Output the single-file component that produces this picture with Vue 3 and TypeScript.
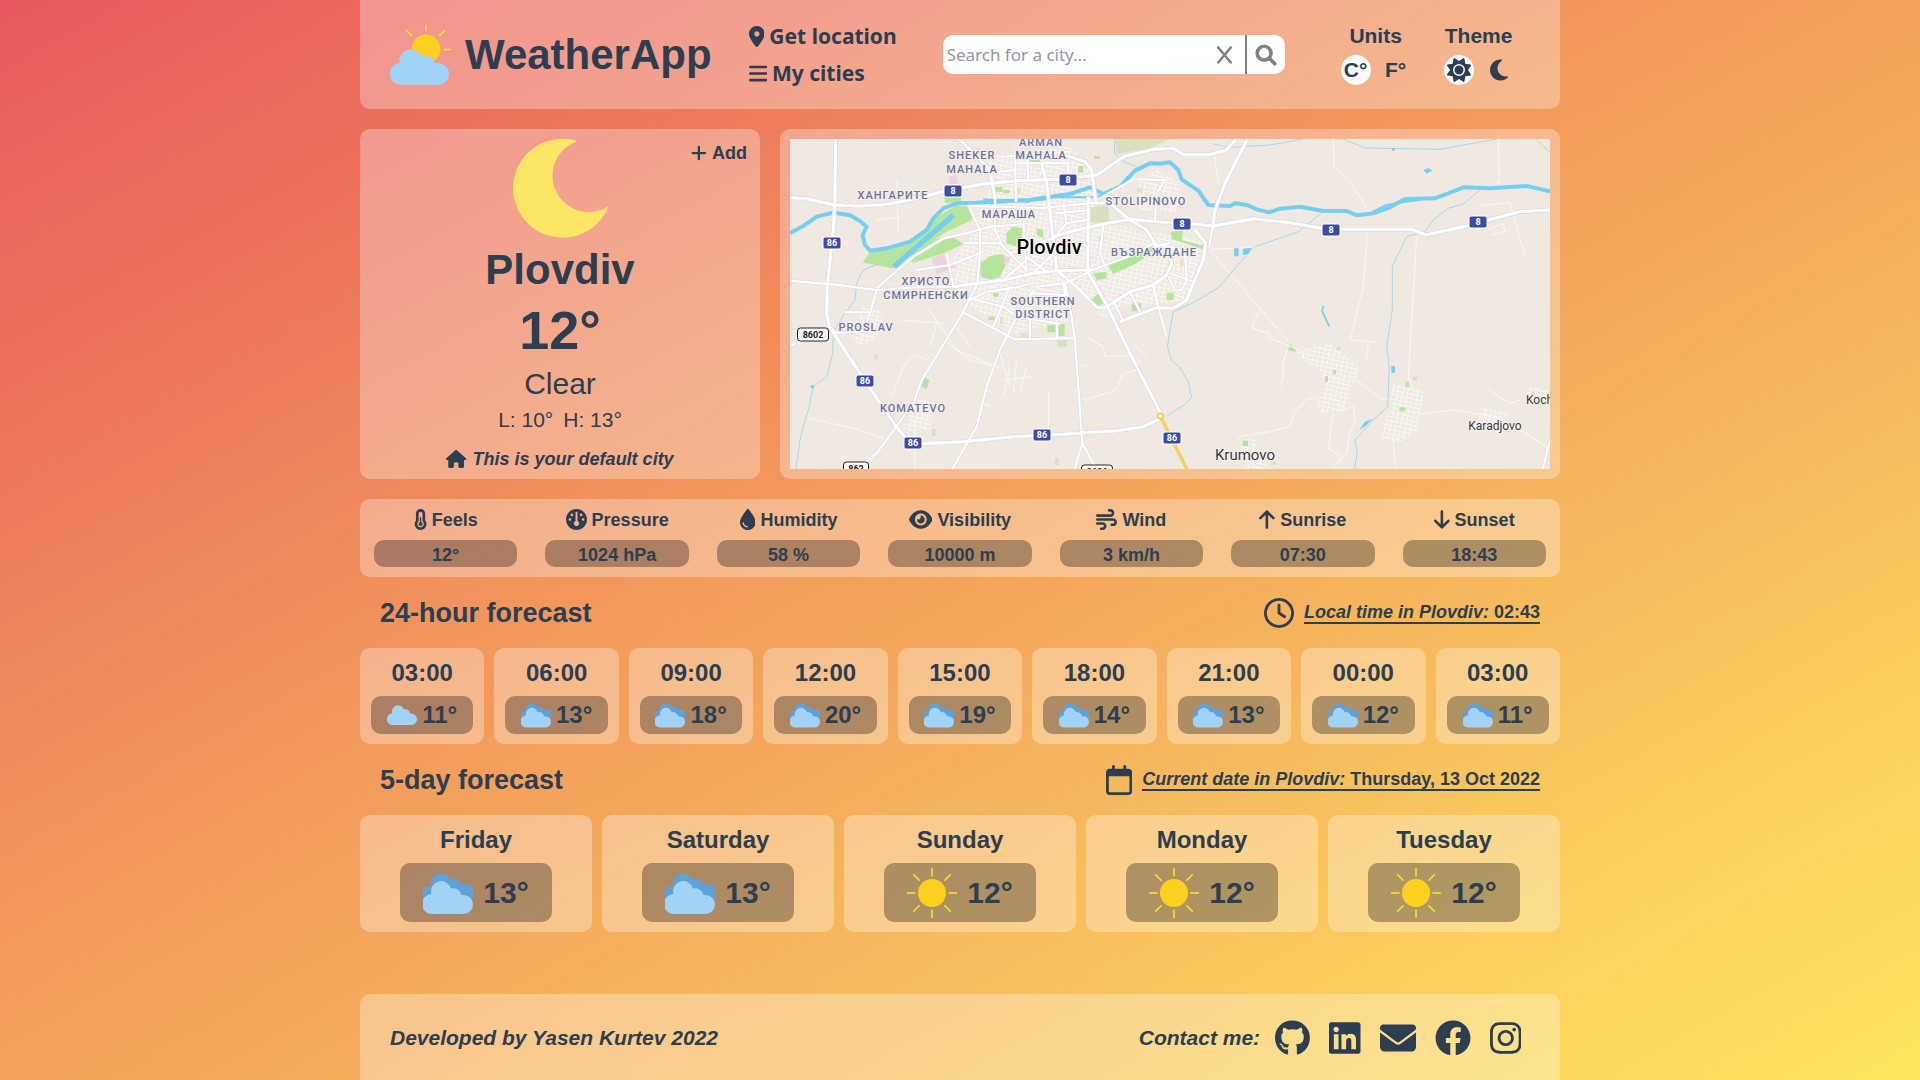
<script setup lang="ts">
import { h, ref, computed } from 'vue'

type Glyph = [width: number, path: string]

const glyphs: Record<string, Glyph> = {
  location: [384, 'M215.7 499.2C267 435 384 279.4 384 192C384 86 298 0 192 0S0 86 0 192c0 87.4 117 243 168.3 307.2c12.3 15.3 35.1 15.3 47.4 0zM192 256c-35.3 0-64-28.7-64-64s28.7-64 64-64s64 28.7 64 64s-28.7 64-64 64z'],
  bars: [448, 'M0 96C0 78.3 14.3 64 32 64H416c17.7 0 32 14.3 32 32s-14.3 32-32 32H32C14.3 128 0 113.7 0 96zM0 256c0-17.7 14.3-32 32-32H416c17.7 0 32 14.3 32 32s-14.3 32-32 32H32c-17.7 0-32-14.3-32-32zM448 416c0 17.7-14.3 32-32 32H32c-17.7 0-32-14.3-32-32s14.3-32 32-32H416c17.7 0 32 14.3 32 32z'],
  clear: [384, 'M376.6 84.5c11.3-13.6 9.5-33.8-4.1-45.1s-33.8-9.5-45.1 4.1L192 206 56.6 43.5C45.3 29.9 25.1 28.1 11.5 39.4S-3.9 70.9 7.4 84.5L150.3 256 7.4 427.5c-11.3 13.6-9.5 33.8 4.1 45.1s33.8 9.5 45.1-4.1L192 306 327.4 468.5c11.3 13.6 31.5 15.4 45.1 4.1s15.4-31.5 4.1-45.1L233.7 256 376.6 84.5z'],
  search: [512, 'M416 208c0 45.9-14.9 88.3-40 122.7L502.6 457.4c12.5 12.5 12.5 32.8 0 45.3s-32.8 12.5-45.3 0L330.7 376c-34.4 25.2-76.8 40-122.7 40C93.1 416 0 322.9 0 208S93.1 0 208 0S416 93.1 416 208zM208 352c79.5 0 144-64.5 144-144s-64.5-144-144-144S64 128.5 64 208s64.5 144 144 144z'],
  sun: [512, 'M361.5 1.2c5 2.1 8.6 6.6 9.6 11.9L391 121l107.9 19.8c5.3 1 9.8 4.6 11.9 9.6s1.5 10.7-1.6 15.2L446.9 256l62.3 90.3c3.1 4.5 3.7 10.2 1.6 15.2s-6.6 8.6-11.9 9.6L391 391 371.1 498.9c-1 5.3-4.6 9.8-9.6 11.9s-10.7 1.5-15.2-1.6L256 446.9l-90.3 62.3c-4.5 3.1-10.2 3.7-15.2 1.6s-8.6-6.6-9.6-11.9L121 391 13.1 371.1c-5.3-1-9.8-4.6-11.9-9.6s-1.5-10.7 1.6-15.2L65.1 256 2.8 165.7c-3.1-4.5-3.7-10.2-1.6-15.2s6.6-8.6 11.9-9.6L121 121 140.9 13.1c1-5.3 4.6-9.8 9.6-11.9s10.7-1.5 15.2 1.6L256 65.1 346.3 2.8c4.5-3.1 10.2-3.7 15.2-1.6zM160 256a96 96 0 1 1 192 0 96 96 0 1 1 -192 0zm224 0a128 128 0 1 0 -256 0 128 128 0 1 0 256 0z'],
  moon: [384, 'M223.5 32C100 32 0 132.3 0 256S100 480 223.5 480c60.6 0 115.5-24.2 155.8-63.4c5-4.9 6.3-12.5 3.1-18.7s-10.1-9.7-17-8.5c-9.8 1.7-19.8 2.6-30.1 2.6c-96.9 0-175.5-78.8-175.5-176c0-65.8 36-123.1 89.3-153.3c6.1-3.5 9.2-10.5 7.7-17.3s-7.3-11.9-14.3-12.5c-6.3-.5-12.6-.8-19-.8z'],
  house: [576, 'M575.8 255.5c0 18-15 32.1-32 32.1h-32l.7 160.2c0 2.7-.2 5.4-.5 8.1V472c0 22.1-17.9 40-40 40H456c-1.1 0-2.2 0-3.3-.1c-1.4 .1-2.8 .1-4.2 .1H416 392c-22.1 0-40-17.9-40-40V448 384c0-17.7-14.3-32-32-32H256c-17.7 0-32 14.3-32 32v64 24c0 22.1-17.9 40-40 40H160 128.1c-1.5 0-3-.1-4.5-.2c-1.2 .1-2.4 .2-3.6 .2H104c-22.1 0-40-17.9-40-40V360c0-.9 0-1.9 .1-2.8V287.6H32c-18 0-32-14-32-32.1c0-9 3-17 10-24L266.4 8c7-7 15-8 22-8s15 2 21 7L564.8 231.5c8 7 12 15 11 24z'],
  plus: [448, 'M256 80c0-17.7-14.3-32-32-32s-32 14.3-32 32V224H48c-17.7 0-32 14.3-32 32s14.3 32 32 32H192V432c0 17.7 14.3 32 32 32s32-14.3 32-32V288H400c17.7 0 32-14.3 32-32s-14.3-32-32-32H256V80z'],
  thermometer: [320, 'M160 64c-26.5 0-48 21.5-48 48V276.5c0 17.3-7.1 31.9-15.3 42.5C86.2 332.6 80 349.5 80 368c0 44.2 35.8 80 80 80s80-35.8 80-80c0-18.5-6.2-35.4-16.7-48.9c-8.2-10.6-15.3-25.2-15.3-42.5V112c0-26.5-21.5-48-48-48zM48 112C48 50.2 98.1 0 160 0s112 50.1 112 112V276.5c0 .1 .1 .3 .2 .6c.2 .6 .8 1.6 1.7 2.8c18.9 24.4 30.1 55 30.1 88.1c0 79.5-64.5 144-144 144S16 447.5 16 368c0-33.2 11.2-63.8 30.1-88.1c.9-1.2 1.5-2.2 1.7-2.8c.1-.3 .2-.5 .2-.6V112zM208 368c0 26.5-21.5 48-48 48s-48-21.5-48-48c0-20.9 13.4-38.7 32-45.3V208c0-8.8 7.2-16 16-16s16 7.2 16 16V322.7c18.6 6.6 32 24.4 32 45.3z'],
  gauge: [512, 'M0 256C0 114.6 114.6 0 256 0S512 114.6 512 256s-114.6 256-256 256S0 397.4 0 256zM320 352c0-26.9-16.5-49.9-40-59.3V88c0-13.3-10.7-24-24-24s-24 10.7-24 24V292.7c-23.5 9.5-40 32.5-40 59.3c0 35.3 28.7 64 64 64s64-28.7 64-64zM144 176a32 32 0 1 0 0-64 32 32 0 1 0 0 64zm-16 80a32 32 0 1 0 -64 0 32 32 0 1 0 64 0zm288 32a32 32 0 1 0 0-64 32 32 0 1 0 0 64zM400 144a32 32 0 1 0 -64 0 32 32 0 1 0 64 0z'],
  droplet: [384, 'M192 512C86 512 0 426 0 320C0 228.8 130.2 57.7 166.6 11.7C172.6 4.2 181.5 0 191.1 0h1.8c9.6 0 18.5 4.2 24.5 11.7C253.8 57.7 384 228.8 384 320c0 106-86 192-192 192zM96 336c0-8.8-7.2-16-16-16s-16 7.2-16 16c0 61.9 50.1 112 112 112c8.8 0 16-7.2 16-16s-7.2-16-16-16c-44.2 0-80-35.8-80-80z'],
  eye: [576, 'M288 32c-80.8 0-145.5 36.8-192.6 80.6C48.6 156 17.3 208 2.5 243.7c-3.3 7.9-3.3 16.7 0 24.6C17.3 304 48.6 356 95.4 399.4C142.5 443.2 207.2 480 288 480s145.5-36.8 192.6-80.6c46.8-43.5 78.1-95.4 93-131.1c3.3-7.9 3.3-16.7 0-24.6c-14.9-35.7-46.2-87.7-93-131.1C433.5 68.8 368.8 32 288 32zM432 256c0 79.5-64.5 144-144 144s-144-64.5-144-144s64.5-144 144-144s144 64.5 144 144zM288 192c0 35.3-28.7 64-64 64c-11.5 0-22.3-3-31.6-8.4c-.2 2.8-.4 5.5-.4 8.4c0 53 43 96 96 96s96-43 96-96s-43-96-96-96c-2.8 0-5.6 .1-8.4 .4c5.3 9.3 8.4 20.1 8.4 31.6z'],
  wind: [512, 'M288 32c0 17.7 14.3 32 32 32h32c17.7 0 32 14.3 32 32s-14.3 32-32 32H32c-17.7 0-32 14.3-32 32s14.3 32 32 32H352c53 0 96-43 96-96s-43-96-96-96H320c-17.7 0-32 14.3-32 32zm64 352c0 17.7 14.3 32 32 32h32c53 0 96-43 96-96s-43-96-96-96H32c-17.7 0-32 14.3-32 32s14.3 32 32 32H416c17.7 0 32 14.3 32 32s-14.3 32-32 32H384c-17.7 0-32 14.3-32 32zM128 512h32c53 0 96-43 96-96s-43-96-96-96H32c-17.7 0-32 14.3-32 32s14.3 32 32 32H160c17.7 0 32 14.3 32 32s-14.3 32-32 32H128c-17.7 0-32 14.3-32 32s14.3 32 32 32z'],
  up: [384, 'M214.6 41.4c-12.5-12.5-32.8-12.5-45.3 0l-160 160c-12.5 12.5-12.5 32.8 0 45.3s32.8 12.5 45.3 0L160 141.2V448c0 17.7 14.3 32 32 32s32-14.3 32-32V141.2L329.4 246.6c12.5 12.5 32.8 12.5 45.3 0s12.5-32.8 0-45.3l-160-160z'],
  down: [384, 'M169.4 470.6c12.5 12.5 32.8 12.5 45.3 0l160-160c12.5-12.5 12.5-32.8 0-45.3s-32.8-12.5-45.3 0L224 370.8V64c0-17.7-14.3-32-32-32s-32 14.3-32 32V370.7L54.6 265.4c-12.5-12.5-32.8-12.5-45.3 0s-12.5 32.8 0 45.3l160 160z'],
  clock: [512, 'M464 256A208 208 0 1 1 48 256a208 208 0 1 1 416 0zM0 256a256 256 0 1 0 512 0A256 256 0 1 0 0 256zM232 120V256c0 8 4 15.5 10.7 20l96 64c11 7.4 25.9 4.4 33.3-6.7s4.4-25.9-6.7-33.3L280 243.2V120c0-13.3-10.7-24-24-24s-24 10.7-24 24z'],
  calendar: [448, 'M152 24c0-13.3-10.7-24-24-24s-24 10.7-24 24V64H64C28.7 64 0 92.7 0 128v16 48V448c0 35.3 28.7 64 64 64H384c35.3 0 64-28.7 64-64V192 144 128c0-35.3-28.7-64-64-64H344V24c0-13.3-10.7-24-24-24s-24 10.7-24 24V64H152V24zM48 192H400V448c0 8.8-7.2 16-16 16H64c-8.8 0-16-7.2-16-16V192z'],
  github: [496, 'M165.9 397.4c0 2-2.3 3.6-5.2 3.6-3.3.3-5.6-1.3-5.6-3.6 0-2 2.3-3.6 5.2-3.6 3-.3 5.6 1.3 5.6 3.6zm-31.1-4.5c-.7 2 1.3 4.3 4.3 4.9 2.6 1 5.6 0 6.2-2s-1.3-4.3-4.3-5.2c-2.6-.7-5.5.3-6.2 2.3zm44.2-1.7c-2.9.7-4.9 2.6-4.6 4.9.3 2 2.9 3.3 5.9 2.6 2.9-.7 4.9-2.6 4.6-4.6-.3-1.9-3-3.2-5.9-2.9zM244.8 8C106.1 8 0 113.3 0 252c0 110.9 69.8 205.8 169.5 239.2 12.8 2.3 17.3-5.6 17.3-12.1 0-6.2-.3-40.4-.3-61.4 0 0-70 15-84.7-29.8 0 0-11.4-29.1-27.8-36.6 0 0-22.9-15.7 1.6-15.4 0 0 24.9 2 38.6 25.8 21.9 38.6 58.6 27.5 72.9 20.9 2.3-16 8.8-27.1 16-33.7-55.9-6.2-112.3-14.3-112.3-110.5 0-27.5 7.6-41.3 23.6-58.9-2.6-6.5-11.1-33.3 2.6-67.9 20.9-6.5 69 27 69 27 20-5.6 41.5-8.5 62.8-8.5s42.8 2.9 62.8 8.5c0 0 48.1-33.6 69-27 13.7 34.7 5.2 61.4 2.6 67.9 16 17.7 25.8 31.5 25.8 58.9 0 96.5-58.9 104.2-114.8 110.5 9.2 7.9 17 22.9 17 46.4 0 33.7-.3 75.4-.3 83.6 0 6.5 4.6 14.4 17.3 12.1C428.2 457.8 496 362.9 496 252 496 113.3 383.5 8 244.8 8zM97.2 352.9c-1.3 1-1 3.3.7 5.2 1.6 1.6 3.9 2.3 5.2 1 1.3-1 1-3.3-.7-5.2-1.6-1.6-3.9-2.3-5.2-1zm-10.8-8.1c-.7 1.3.3 2.9 2.3 3.9 1.6 1 3.6.7 4.3-.7.7-1.3-.3-2.9-2.3-3.9-2-.6-3.6-.3-4.3.7zm32.4 35.6c-1.6 1.3-1 4.3 1.3 6.2 2.3 2.3 5.2 2.6 6.5 1 1.3-1.3.7-4.3-1.3-6.2-2.2-2.3-5.2-2.6-6.5-1zm-11.4-14.7c-1.6 1-1.6 3.6 0 5.9 1.6 2.3 4.3 3.3 5.6 2.3 1.6-1.3 1.6-3.9 0-6.2-1.4-2.3-4-3.3-5.6-2z'],
  linkedin: [448, 'M416 32H31.9C14.3 32 0 46.5 0 64.3v383.4C0 465.5 14.3 480 31.9 480H416c17.6 0 32-14.5 32-32.3V64.3c0-17.8-14.4-32.3-32-32.3zM135.4 416H69V202.2h66.5V416zm-33.2-243c-21.3 0-38.5-17.3-38.5-38.5S80.9 96 102.2 96c21.2 0 38.5 17.3 38.5 38.5 0 21.3-17.2 38.5-38.5 38.5zm282.1 243h-66.4V312c0-24.8-.5-56.7-34.5-56.7-34.6 0-39.9 27-39.9 54.9V416h-66.4V202.2h63.7v29.2h.9c8.9-16.8 30.6-34.5 62.9-34.5 67.2 0 79.7 44.3 79.7 101.9V416z'],
  envelope: [512, 'M48 64C21.5 64 0 85.5 0 112c0 15.1 7.1 29.3 19.2 38.4L236.8 313.6c11.4 8.5 27 8.5 38.4 0L492.8 150.4c12.1-9.1 19.2-23.3 19.2-38.4c0-26.5-21.5-48-48-48H48zM0 176V384c0 35.3 28.7 64 64 64H448c35.3 0 64-28.7 64-64V176L294.4 339.2c-22.8 17.1-54 17.1-76.8 0L0 176z'],
  facebook: [512, 'M504 256C504 119 393 8 256 8S8 119 8 256c0 123.78 90.69 226.38 209.25 245V327.69h-63V256h63v-54.64c0-62.15 37-96.48 93.67-96.48 27.14 0 55.52 4.84 55.52 4.84v61h-31.28c-30.8 0-40.41 19.12-40.41 38.73V256h68.78l-11 71.69h-57.78V501C413.31 482.38 504 379.78 504 256z'],
  instagram: [448, 'M224.1 141c-63.6 0-114.9 51.3-114.9 114.9s51.3 114.9 114.9 114.9S339 319.5 339 255.9 287.7 141 224.1 141zm0 189.6c-41.1 0-74.7-33.5-74.7-74.7s33.5-74.7 74.7-74.7 74.7 33.5 74.7 74.7-33.6 74.7-74.7 74.7zm146.4-194.3c0 14.9-12 26.8-26.8 26.8-14.9 0-26.8-12-26.8-26.8s12-26.8 26.8-26.8 26.8 12 26.8 26.8zm76.1 27.2c-1.7-35.9-9.9-67.7-36.2-93.9-26.2-26.2-58-34.4-93.9-36.2-37-2.1-147.9-2.1-184.9 0-35.8 1.7-67.6 9.9-93.9 36.1s-34.4 58-36.2 93.9c-2.1 37-2.1 147.9 0 184.9 1.7 35.9 9.9 67.7 36.2 93.9s58 34.4 93.9 36.2c37 2.1 147.9 2.1 184.9 0 35.9-1.7 67.7-9.9 93.9-36.2 26.2-26.2 34.4-58 36.2-93.9 2.1-37 2.1-147.8 0-184.8zM398.8 388c-7.8 19.6-22.9 34.7-42.6 42.6-29.5 11.7-99.5 9-132.1 9s-102.7 2.6-132.1-9c-19.6-7.8-34.7-22.9-42.6-42.6-11.7-29.5-9-99.5-9-132.1s-2.6-102.7 9-132.1c7.8-19.6 22.9-34.7 42.6-42.6 29.5-11.7 99.5-9 132.1-9s102.7-2.6 132.1 9c19.6 7.8 34.7 22.9 42.6 42.6 11.7 29.5 9 99.5 9 132.1s2.7 102.7-9 132.1z'],
}

const Icon = (props: { name: string }) => {
  const [width, path] = glyphs[props.name]
  return h('svg', { viewBox: `0 0 ${width} 512`, fill: 'currentColor', 'aria-hidden': 'true' }, [h('path', { d: path })])
}
Icon.props = ['name']

const units = ref<'C' | 'F'>('C')
const theme = ref<'light' | 'dark'>('light')
const query = ref('')

const show = (celsius: number) => `${units.value === 'C' ? celsius : Math.round(celsius * 1.8 + 32)}°`

const details = computed(() => [
  { icon: 'thermometer', label: 'Feels', value: show(12) },
  { icon: 'gauge', label: 'Pressure', value: '1024 hPa' },
  { icon: 'droplet', label: 'Humidity', value: '58 %' },
  { icon: 'eye', label: 'Visibility', value: '10000 m' },
  { icon: 'wind', label: 'Wind', value: '3 km/h' },
  { icon: 'up', label: 'Sunrise', value: '07:30' },
  { icon: 'down', label: 'Sunset', value: '18:43' },
])

const hours = [
  { time: '03:00', sky: 'cloud', temp: 11 },
  { time: '06:00', sky: 'clouds', temp: 13 },
  { time: '09:00', sky: 'clouds', temp: 18 },
  { time: '12:00', sky: 'clouds', temp: 20 },
  { time: '15:00', sky: 'clouds', temp: 19 },
  { time: '18:00', sky: 'clouds', temp: 14 },
  { time: '21:00', sky: 'clouds', temp: 13 },
  { time: '00:00', sky: 'clouds', temp: 12 },
  { time: '03:00', sky: 'clouds', temp: 11 },
]

const days = [
  { name: 'Friday', sky: 'clouds', temp: 13 },
  { name: 'Saturday', sky: 'clouds', temp: 13 },
  { name: 'Sunday', sky: 'clear', temp: 12 },
  { name: 'Monday', sky: 'clear', temp: 12 },
  { name: 'Tuesday', sky: 'clear', temp: 12 },
]

const contacts = [
  { icon: 'github', label: 'GitHub' },
  { icon: 'linkedin', label: 'LinkedIn' },
  { icon: 'envelope', label: 'Email' },
  { icon: 'facebook', label: 'Facebook' },
  { icon: 'instagram', label: 'Instagram' },
]

const majorRoads = [
  'M60 233L110 236 190 254 260 258 340 254 420 240 520 214 640 192 740 182 870 178 980 166 1060 110 1150 88 1210 85 1240 104 1320 104 1370 90 1398 57',
  'M197 57L195 240 190 330 182 400 172 500 170 580 178 620 270 760 375 915 400 945 430 972 580 965 730 950 880 943 1040 932 1120 920 1172 895',
  'M550 500L625 490 700 480 790 460 860 452 960 450',
  'M850 350L920 330 1000 312 1080 298 1170 306 1270 312 1330 318 1450 296 1560 308 1670 328 1927 328 1967 345 2090 318 2250 275 2340 270',
  'M568 57L660 150 675 235',
  'M815 130L830 190 845 320 860 450 930 510 980 562 1005 564 1080 515 1150 495 1190 465 1205 430 1195 390 1175 370',
  'M955 230L953 455 1010 555 1080 700 1172 880',
  'M978 250L965 150 945 125 870 100',
  'M1020 250L1080 300 1130 330 1160 378',
  'M1275 330L1307 370 1300 420 1270 490 1250 540 1210 565 1160 563 1050 605',
  'M1432 57L1365 190 1335 270 1327 330',
]

const minorRoads = [
  'M60 482L200 494 320 510 440 502 550 500',
  'M595 255L630 330 630 400 622 490 580 575 455 780 430 850 375 925 320 1000 280 1030',
  'M320 510L300 580 290 610M320 505L430 410 520 355 590 340 660 320',
  'M885 490L905 590 915 660 925 800 937 970 910 1060M937 970L975 1040',
  'M545 1050L620 920 650 800 690 690 735 600 790 510',
  'M60 678L110 652M178 620L200 640 290 632M225 577L298 577',
  'M600 535L700 560 740 590 870 612M575 575L735 658 910 655',
  'M595 258L820 264 960 250 1020 250',
  'M675 235L675 330 700 380 770 450M735 90L738 245M770 95L775 180M700 110L900 95M740 130L895 130 895 180M640 160L740 150',
  'M760 300L770 455M660 320L760 312M580 370L690 370 720 400 860 350M530 400L550 500M440 450L540 435 640 395',
  'M700 480L770 420M790 460L850 400M770 410L830 455M880 250L890 310 855 350M890 310L950 300M860 280L960 270M1000 318L990 400 1010 450',
  'M885 490L960 455M953 455L1100 400 1150 370M1100 178L1185 180M1000 230L1090 178M1155 300L1160 220 1185 180',
  'M600 540L650 515 750 500 780 490M720 500L670 620M800 500L880 490M880 490L885 525 780 520M780 600L780 655M860 600L862 655',
  'M1030 540L1060 605M1080 515L1110 575M1150 495L1165 563 1190 650M1195 470L1215 512 1235 510 1250 480 1245 400M1200 460L1270 485M1185 380L1225 385 1245 410',
  'M1318 380L1327 320M2318 1047L2340 960M1165 563L1150 500M1150 380L1200 370',
]

const lanes = [
  'M400 740L365 830M400 740L430 705 470 720M390 600L520 610M470 560L560 690 680 740M500 610L480 680M520 660L600 720 700 745M560 620L600 680M690 700L720 800M720 740L700 830M740 720L730 820M770 740L750 820M790 770L700 780M640 850L660 860M670 820L640 810M120 895L250 925 360 960M435 900L435 1047M835 810L835 940M950 650L1000 680 1005 710 1090 706M945 840L1040 810 1060 760 1100 750M920 740L950 735M380 180L385 340M320 300L390 290M1090 670L1135 715',
  'M1690 57L1692 140 1750 200 1788 260M1792 340L1780 500 1740 660 1820 665M1795 665L1790 720M1940 350L1915 770 1930 810M1318 388L1560 670M1320 388L1460 382M1470 565L1445 625 1498 640 1498 655 1590 690M1560 670L1540 720 1540 770 1530 800M2185 57L2188 190 2175 190M2125 257L2220 248 2262 398M2160 325L2200 312 2205 335 2165 345M1333 105L1345 190M1760 780L1830 835 1860 840M1950 882L2060 870 2140 885 2200 900M1640 835L1610 838 1570 880 1560 920 1500 935 1400 950M1690 880L1675 985 1710 1005 1712 1020 1685 1047M1700 875L1750 860 1755 900 1740 940 1730 1000 1700 1030M1870 960L1877 1047M2150 805L2220 850 2250 840M2250 930L2330 980',
]

const streams = [
  'M370 395L330 430 280 450 260 490 255 540 225 580 205 610 190 640 188 700 170 770 130 800 115 870 105 900 90 960 78 1047',
  'M1330 72L1385 82 1500 75 1600 57M1720 57L1785 84 2010 88 2180 57M2300 57L2320 80 2340 95M1035 57L1033 100 1060 125 1100 140',
  'M1660 275L1585 335 1450 382 1345 503 1270 548 1210 575 1192 680 1205 722 1228 740 1255 785 1265 832 1240 857 1190 888',
  'M2130 210L2080 252 2035 265 1990 300 1965 335 1910 350 1867 440 1867 570 1850 680 1858 740 1853 860 1810 900 1755 960 1762 1000 1753 1047',
]

const greens = [
  'M278 428L300 396 370 385 450 345 500 290 560 256 603 260 605 300 530 335 430 400 370 445 320 436z',
  'M420 420L440 370 545 348 580 372 520 400 430 428z',
  'M632 470L630 430 660 408 700 402 705 440 690 470 665 480z',
  'M710 370L708 340 730 320 755 325 755 375 740 380z',
  'M1010 430L1140 375 1160 385 1100 430 1030 462z',
  'M1203 335L1240 330 1235 360 1300 378 1298 388 1205 357z',
  'M520 210L570 225 575 245 525 250zM965 540L985 520 1000 550 985 558zM970 460L1010 455 1010 475 980 482zM455 800L463 772 478 780 470 808z',
  'M800 325L820 330 820 355 800 345zM780 118h30v14h-30zM862 612h22v36h-22zM832 615h24v22h-24zM670 200h28v16h-28zM925 138h14v20h-14zM973 108h16v9h-16zM700 210h20v10h-20zM1085 550h28v24h-28zM655 590h20v10h-20zM670 518h16v12h-16z',
  'M1558 667L1580 695 1552 690zM1688 750h10v13h-10zM1665 768h9v17h-9zM1906 785h11v17h-11zM1888 862h18v12h-18zM1418 962h17v16h-17zM1190 520h20v20h-20z',
]

const blocks = [
  'M640 110L900 80 960 150 1000 310 1170 340 1300 360 1260 540 1040 560 1000 600 900 490 740 500 560 520 540 420 620 330 620 260 670 200z',
  'M620 500L800 500 880 520 900 600 740 640 600 560z',
  'M280 560L330 570 340 620 310 660 270 680 240 640z',
  'M440 830L490 850 480 930 400 930 420 880z',
  'M1100 180L1160 150 1230 190 1220 280 1110 270z',
  'M1580 695L1680 670 1765 740 1755 780 1720 870 1650 880 1640 850 1665 800 1660 760 1600 720z',
  'M1870 790L1960 810 1945 930 1890 965 1830 960 1860 870z',
  'M1405 955L1465 960 1450 1000 1505 1047 1430 1047zM2140 860L2215 880 2180 930 2110 930zM2270 800L2335 810 2335 840 2275 840z',
]

const river =
  'M60 340L100 318 140 290 190 278 240 286 270 303 290 320 278 345 285 375 300 392 350 385 420 365 470 330 490 295 520 265 560 250 620 248 700 243 780 240 830 232 900 222 960 202 1000 222 1050 200 1095 152 1140 130 1170 131 1200 127 1225 150 1235 178 1285 212 1315 255 1380 258 1395 250 1432 255 1460 268 1498 277 1530 266 1590 260 1660 273 1730 273 1762 286 1810 280 1860 262 1905 237 1995 235 2030 222 2080 202 2160 205 2270 198 2340 214'

const districts = [
  { x: 182, y: 20, text: 'SHEKER' },
  { x: 182, y: 34, text: 'MAHALA' },
  { x: 251, y: 7, text: 'ARMAN' },
  { x: 251, y: 20, text: 'MAHALA' },
  { x: 103, y: 60, text: 'ХАНГАРИТЕ' },
  { x: 219, y: 79, text: 'МАРАША' },
  { x: 356, y: 66, text: 'STOLIPINOVO' },
  { x: 364, y: 117, text: 'ВЪЗРАЖДАНЕ' },
  { x: 136, y: 146, text: 'ХРИСТО' },
  { x: 136, y: 160, text: 'СМИРНЕНСКИ' },
  { x: 253, y: 166, text: 'SOUTHERN' },
  { x: 253, y: 179, text: 'DISTRICT' },
  { x: 76, y: 192, text: 'PROSLAV' },
  { x: 123, y: 273, text: 'KOMATEVO' },
]

const shields = [
  { x: 163, y: 52, text: '8' },
  { x: 278, y: 41, text: '8' },
  { x: 392, y: 85, text: '8' },
  { x: 541, y: 91, text: '8' },
  { x: 688, y: 83, text: '8' },
  { x: 42, y: 104, text: '86' },
  { x: 75, y: 242, text: '86' },
  { x: 123, y: 304, text: '86' },
  { x: 252, y: 296, text: '86' },
  { x: 382, y: 299, text: '86' },
]

const localRoads = [
  { x: 23, y: 195, width: 31, text: '8602' },
  { x: 66, y: 329, width: 25, text: '862' },
  { x: 307, y: 332, width: 31, text: '8606' },
]
</script>

<template>
  <div class="page">
    <svg class="sprite" aria-hidden="true">
      <symbol id="sky-cloud" viewBox="0 0 50 50">
        <path class="cloud-front" d="M10 41.500a9.500 9.500 0 0 1-1-19.500A10 10 0 0 1 28 15.500A8.500 8.500 0 0 1 38.500 22.500H40.500a9.500 9.500 0 0 1 0 19z" />
      </symbol>
      <symbol id="sky-clouds" viewBox="0 0 50 50">
        <path class="cloud-back" d="M3 33A7.500 7.500 0 0 1 8.500 19A9.800 9.800 0 0 1 27.500 12A7.500 7.500 0 0 1 38.500 17.500A8 8 0 0 1 48.500 33z" />
        <path class="cloud-front" d="M9.500 46a9.700 9.700 0 0 1-1-20A10 10 0 0 1 28 20.500A8.500 8.500 0 0 1 38.500 27H40.500a9.500 9.500 0 0 1 0 19z" />
      </symbol>
      <symbol id="sky-clear" viewBox="0 0 50 50">
        <circle class="sun-disc" cx="25" cy="25" r="14" />
        <path class="sun-rays" d="M25 0v8M25 42v8M0 25h8M42 25h8M6.700 6.700l5.500 5.500M37.800 37.800l5.500 5.500M43.300 6.700l-5.500 5.500M12.200 37.800l-5.500 5.500" />
      </symbol>
    </svg>

    <header class="panel header">
      <a class="brand" href="#">
        <svg class="logo" viewBox="0 0 60 60" aria-hidden="true">
          <circle class="sun-disc" cx="36" cy="24" r="14.500" />
          <path class="sun-rays" d="M36 0v6M16.500 5.500l5 5M54.500 5.500l-5 5M54 24.500h6" />
          <path class="cloud-front" d="M11 60a11.200 11.200 0 0 1-1.500-22.300A11.500 11.500 0 0 1 31.500 31.500A9.500 9.500 0 0 1 45 38H48a11 11 0 0 1 0 22z" />
        </svg>
        <h1>WeatherApp</h1>
      </a>

      <nav class="links" aria-label="Main">
        <button type="button"><Icon name="location" />Get location</button>
        <button type="button"><Icon name="bars" />My cities</button>
      </nav>

      <form class="search" role="search" @submit.prevent>
        <input v-model="query" type="text" placeholder="Search for a city..." aria-label="Search for a city" />
        <button type="button" class="search-clear" aria-label="Clear" @click="query = ''"><Icon name="clear" /></button>
        <button type="submit" class="search-go" aria-label="Search"><Icon name="search" /></button>
      </form>

      <div class="switch" role="group" aria-label="Units">
        <span>Units</span>
        <div class="options">
          <button type="button" :class="{ active: units === 'C' }" @click="units = 'C'">C°</button>
          <button type="button" :class="{ active: units === 'F' }" @click="units = 'F'">F°</button>
        </div>
      </div>
      <div class="switch" role="group" aria-label="Theme">
        <span>Theme</span>
        <div class="options">
          <button type="button" aria-label="Light" :class="{ active: theme === 'light' }" @click="theme = 'light'"><Icon name="sun" /></button>
          <button type="button" aria-label="Dark" :class="{ active: theme === 'dark' }" @click="theme = 'dark'"><Icon name="moon" /></button>
        </div>
      </div>
    </header>

    <main>
      <div class="overview">
        <section class="panel current">
          <button type="button" class="add"><Icon name="plus" />Add</button>
          <svg class="night" viewBox="-1 0 100 100" aria-hidden="true">
            <path d="M66.500 2A49.500 49.500 0 1 0 97.500 67.500A36.500 36.500 0 1 1 66.500 2z" />
          </svg>
          <h2>Plovdiv</h2>
          <p class="temp">{{ show(12) }}</p>
          <p class="sky">Clear</p>
          <p class="range"><span>L: {{ show(10) }}</span><span>H: {{ show(13) }}</span></p>
          <p class="default"><Icon name="house" />This is your default city</p>
        </section>

        <section class="panel map" aria-label="Map">
          <svg viewBox="0 0 760 330" preserveAspectRatio="xMidYMid slice">
            <defs>
              <pattern id="streets" width="15" height="13" patternUnits="userSpaceOnUse" patternTransform="rotate(12)">
                <path class="lane" d="M0 1H15M1 0V13" />
              </pattern>
            </defs>
            <rect class="land" width="760" height="330" />
            <g transform="translate(-20 -19) scale(.33333)">
              <path v-for="d in blocks" :key="d" class="district" :d="d" />
              <path class="field" d="M1038 57L1200 57 1140 85 1040 102zM962 262L1015 255 1018 305 962 308zM860 655L892 655 890 680 862 680zM312 703L328 708 315 722zM485 928h12v20h-12zM855 1015h12v20h-12zM1700 680h12v10h-12zM1928 770h14v12h-14zM1508 1018l14 16h-14z" />
              <path class="pink" d="M485 415L520 403 530 420 560 440 500 462zM535 172L558 165 565 190 540 195zM700 405L722 415 705 440z" />
              <path class="sand" d="M735 205h18v14h-18zM1102 205h16v12h-16zM985 350h16v14h-16zM690 590h10v22h-10zM752 640h22v12h-22zM875 380h18v12h-18zM985 465h20v12h-20zM620 85h12v12h-12zM1230 420h10v18h-10zM1190 518h22v20h-22z" />
              <path v-for="d in greens" :key="d" class="green" :d="d" />
              <path v-for="d in lanes" :key="d" class="lane" :d="d" />
              <path v-for="d in streams" :key="d" class="stream" :d="d" />
              <path class="river" :d="river" />
              <path class="river thin" d="M830 232L900 232 975 232 1010 220M660 250L840 238M1808 275L1850 255 1905 245 1950 240M640 238L780 246" />
              <path class="river canal" d="M372 440L550 286" />
              <path class="pond" d="M1392 385h14v24h-14zM1420 386L1445 383 1435 402 1418 405zM1960 150L1975 144 1988 152 1970 161zM1864 738h11v20h-11zM1768 930L1785 905 1808 896 1790 915zM1866 84h9v8h-9zM122 796h10v8h-10z" />
              <path class="stream brook" d="M1661 557L1656 572 1678 620" />
              <path v-for="d in minorRoads" :key="d" class="minor casing" :d="d" />
              <path v-for="d in majorRoads" :key="d" class="major casing" :d="d" />
              <path v-for="d in minorRoads" :key="d" class="minor" :d="d" />
              <path v-for="d in majorRoads" :key="d" class="major" :d="d" />
              <path class="highway" d="M1174 895L1252 1050" />
              <circle class="junction" cx="1172" cy="888" r="8" />
            </g>
            <text v-for="d in districts" :key="d.text + d.y" class="label" :x="d.x" :y="d.y">{{ d.text }}</text>
            <g v-for="s in shields" :key="`${s.x}-${s.y}`">
              <rect class="shield" :x="s.x - 9" :y="s.y - 6" width="18" height="12" rx="2" />
              <text class="shield-text" :x="s.x" :y="s.y + 3">{{ s.text }}</text>
            </g>
            <g v-for="s in localRoads" :key="s.text">
              <rect class="local" :x="s.x - s.width / 2" :y="s.y - 6" :width="s.width" height="13" rx="3" />
              <text class="local-text" :x="s.x" :y="s.y + 4">{{ s.text }}</text>
            </g>
            <text class="city" x="259" y="115">Plovdiv</text>
            <text class="town" x="455" y="321">Krumovo</text>
            <text class="village" x="705" y="291">Karadjovo</text>
            <text class="village start" x="736" y="265">Kochevo</text>
          </svg>
        </section>
      </div>

      <dl class="panel details">
        <div v-for="d in details" :key="d.label">
          <dt><Icon :name="d.icon" />{{ d.label }}</dt>
          <dd class="pill">{{ d.value }}</dd>
        </div>
      </dl>

      <section>
        <div class="heading">
          <h3>24-hour forecast</h3>
          <div class="now"><Icon name="clock" /><p><em>Local time in Plovdiv:</em> 02:43</p></div>
        </div>
        <ul class="cards hours">
          <li v-for="(hour, i) in hours" :key="i" class="panel">
            <h4>{{ hour.time }}</h4>
            <p class="pill"><svg aria-hidden="true"><use :href="`#sky-${hour.sky}`" /></svg>{{ show(hour.temp) }}</p>
          </li>
        </ul>
      </section>

      <section>
        <div class="heading">
          <h3>5-day forecast</h3>
          <div class="now"><Icon name="calendar" /><p><em>Current date in Plovdiv:</em> Thursday, 13 Oct 2022</p></div>
        </div>
        <ul class="cards days">
          <li v-for="day in days" :key="day.name" class="panel">
            <h4>{{ day.name }}</h4>
            <p class="pill"><svg aria-hidden="true"><use :href="`#sky-${day.sky}`" /></svg>{{ show(day.temp) }}</p>
          </li>
        </ul>
      </section>
    </main>

    <footer class="panel footer">
      <p>Developed by Yasen Kurtev 2022</p>
      <div class="contact">
        <p>Contact me:</p>
        <ul>
          <li v-for="c in contacts" :key="c.icon"><a href="#" :aria-label="c.label"><Icon :name="c.icon" /></a></li>
        </ul>
      </div>
    </footer>
  </div>
</template>

<style>
body {
  margin: 0;
}
</style>

<style scoped>
.page {
  display: flex;
  flex-direction: column;
  align-items: center;
  min-height: 100vh;
  color: #2c3e50;
  font-family: "Liberation Sans", Arial, sans-serif;
  font-size: 18px;
  background: linear-gradient(to bottom right, #e9585c, #f3a25c, #ffe65e);
}

.page *,
.page {
  box-sizing: border-box;
}

h1, h2, h3, h4, p, ul, dl, dd {
  margin: 0;
  padding: 0;
}

ul {
  list-style: none;
}

button {
  padding: 0;
  border: 0;
  background: none;
  color: inherit;
  font: inherit;
  cursor: pointer;
}

a {
  color: inherit;
  text-decoration: none;
}

svg {
  display: block;
  flex: none;
}

.sprite {
  position: absolute;
  width: 0;
  height: 0;
}

.panel {
  background: rgba(255, 255, 255, 0.3);
  border-radius: 10px;
}

.pill {
  display: flex;
  align-items: center;
  justify-content: center;
  background: rgba(0, 0, 0, 0.3);
  border-radius: 10px;
}

.header,
main,
.footer {
  width: 100%;
  max-width: 1200px;
}

.header {
  display: flex;
  align-items: center;
  height: 109px;
  padding: 0 30px;
  border-radius: 0 0 10px 10px;
}

.brand {
  display: flex;
  align-items: center;
  gap: 15px;
}

.logo {
  width: 60px;
  height: 60px;
  overflow: visible;
}

h1 {
  font-size: 42px;
  line-height: 48px;
}

.links {
  display: flex;
  flex-direction: column;
  align-items: flex-start;
  margin-left: 37px;
  font-family: "Noto Sans", sans-serif;
  font-weight: 700;
  font-size: 21px;
}

.links button {
  display: flex;
  align-items: center;
  gap: 5px;
  height: 37px;
  white-space: nowrap;
}

.links svg {
  height: 21px;
}

.search {
  display: flex;
  flex: 0 1 342px;
  height: 39px;
  margin-left: 46px;
  overflow: hidden;
  border-radius: 10px;
  background: #fff;
  color: #808080;
}

.search input {
  flex: 1;
  min-width: 0;
  padding: 0 4px;
  border: 0;
  outline: 0;
  background: none;
  color: #2c3e50;
  font-family: "Noto Sans", sans-serif;
  font-size: 17px;
}

.search input::placeholder {
  color: #8f99a3;
}

.search button {
  display: flex;
  align-items: center;
  justify-content: center;
  width: 40px;
}

.search svg {
  height: 20px;
}

.search .search-go {
  border-left: 2px solid #808080;
}

.search-go svg {
  overflow: visible;
  stroke: currentColor;
  stroke-width: 28px;
}

.switch {
  display: flex;
  flex-direction: column;
  align-items: center;
  gap: 7px;
  margin-left: 56px;
  font-weight: 700;
  font-size: 21px;
  line-height: 24px;
}

.switch + .switch {
  margin-left: 33px;
}

.options {
  display: flex;
  gap: 10px;
}

.options button {
  display: flex;
  align-items: center;
  justify-content: center;
  width: 30px;
  height: 30px;
  border-radius: 50%;
}

.options .active {
  background: #fafafa;
}

.options svg {
  height: 24px;
}

.overview {
  display: flex;
  gap: 20px;
  height: 350px;
  margin-top: 20px;
}

.current {
  position: relative;
  display: flex;
  flex: 0 0 400px;
  flex-direction: column;
  align-items: center;
  padding-top: 10px;
}

.add {
  position: absolute;
  top: 14px;
  right: 13px;
  display: flex;
  align-items: center;
  gap: 5px;
  font-weight: 700;
  line-height: 20px;
}

.add svg {
  height: 18px;
}

.night {
  width: 100px;
  height: 100px;
  fill: #fce666;
}

h2 {
  margin-top: 7px;
  font-size: 42px;
  line-height: 48px;
}

.temp {
  margin-top: 4px;
  font-weight: 700;
  font-size: 54px;
  line-height: 64px;
}

.sky {
  margin-top: 5px;
  font-size: 30px;
  line-height: 34px;
}

.range {
  display: flex;
  gap: 10px;
  margin-top: 7px;
  font-size: 21px;
  line-height: 24px;
}

.default {
  display: flex;
  align-items: center;
  gap: 6px;
  margin-top: 17px;
  font-weight: 700;
  font-style: italic;
  line-height: 20px;
}

.default svg {
  height: 18px;
}

.map {
  flex: 1;
  min-width: 0;
  padding: 10px;
}

.map > svg {
  width: 100%;
  height: 100%;
}

.map path {
  fill: none;
  stroke-linejoin: round;
}

.land { fill: #f0e9e1; }
.map .field { fill: #d9e0bd; }
.map .pink { fill: #ecd2da; }
.map .sand { fill: #e9dfba; }
.map .green { fill: #b5e59c; }
.map .pond { fill: #76cff3; }
.map .district { fill: url(#streets); }
.lane { stroke: #fbf8f4; stroke-width: 3px; }
.stream { stroke: #a8d5ee; stroke-width: 3px; }
.stream.brook { stroke: #76cff3; stroke-width: 5px; }
.river { stroke: #76cff3; stroke-width: 12px; }
.river.thin { stroke-width: 6px; }
.river.canal { stroke-width: 16px; }
.minor { stroke: #fff; stroke-width: 6px; }
.major { stroke: #fff; stroke-width: 9px; }
.minor.casing { stroke: #dcdde9; stroke-width: 10px; }
.major.casing { stroke: #dcdde9; stroke-width: 14px; }
.highway { stroke: #f3d15e; stroke-width: 10px; }
.junction { fill: #fff; stroke: #f3d15e; stroke-width: 6px; }

.map text {
  font-family: Roboto, sans-serif;
  text-anchor: middle;
  paint-order: stroke;
  stroke-linejoin: round;
}

.map .label {
  fill: #6b749f;
  stroke: #f4efea;
  stroke-width: 2px;
  font-weight: 500;
  font-size: 11px;
  letter-spacing: 1px;
}

.map .city {
  fill: #000;
  stroke: #fff;
  stroke-width: 2px;
  font-weight: 500;
  font-size: 20px;
}

.map .town,
.map .village {
  fill: #3a3a3e;
  stroke: #f6f2ee;
  stroke-width: 2px;
  font-size: 12px;
}

.map .town {
  font-size: 15px;
}

.map .start {
  text-anchor: start;
}

.shield {
  fill: #3b4ba6;
  stroke: #fff;
}

.map .shield-text {
  fill: #fff;
  font-weight: 700;
  font-size: 9px;
}

.local {
  fill: #fff;
  stroke: #222;
}

.map .local-text {
  fill: #222;
  font-weight: 700;
  font-size: 9px;
}

.details {
  display: flex;
  height: 78px;
  margin-top: 20px;
  font-weight: 700;
  line-height: 20px;
}

.details > div {
  flex: 1;
  padding: 10px 14px 0;
}

dt {
  display: flex;
  align-items: center;
  justify-content: center;
  gap: 5px;
  height: 21px;
}

dt svg {
  height: 21px;
}

dd.pill {
  height: 27px;
  margin-top: 10px;
  padding-top: 2px;
}

.heading {
  display: flex;
  align-items: center;
  justify-content: space-between;
  height: 71px;
  padding: 0 20px;
}

h3 {
  font-size: 27px;
  line-height: 32px;
}

.now {
  display: flex;
  align-items: center;
  gap: 10px;
  font-weight: 700;
}

.now svg {
  height: 30px;
}

.now p {
  padding-top: 2px;
  border-bottom: 2px solid #2c3e50;
  line-height: 19px;
}

.cards {
  display: flex;
  gap: 10px;
}

.cards li {
  flex: 1;
}

h4,
.hours .pill {
  font-weight: 700;
  font-size: 24px;
  line-height: 28px;
}

h4 {
  padding-top: 1px;
  text-align: center;
}

.cards .pill {
  margin-top: 9px;
}

.hours li {
  padding: 10px 11px;
}

.hours .pill {
  gap: 5px;
  height: 38px;
}

.hours svg {
  width: 30px;
  height: 30px;
}

.days li {
  padding: 10px 40px;
}

.days .pill {
  gap: 10px;
  height: 59px;
  font-weight: 700;
  font-size: 30px;
}

.days svg {
  width: 50px;
  height: 50px;
}

.cloud-front { fill: #a2d3f7; stroke: none; }
.cloud-back { fill: #5fa2da; stroke: none; }
.sun-disc { fill: #fdd020; }
.sun-rays { fill: none; stroke: #fde52c; stroke-width: 1.5px; stroke-linecap: round; }

.footer {
  display: flex;
  align-items: center;
  justify-content: space-between;
  height: 86px;
  margin-top: auto;
  padding: 1px 39px 0 30px;
  border-radius: 10px 10px 0 0;
  font-weight: 700;
  font-style: italic;
  font-size: 21px;
}

.contact {
  display: flex;
  align-items: center;
  gap: 15px;
}

.contact ul {
  display: flex;
  align-items: center;
  gap: 19px;
}

.contact svg {
  height: 36px;
}
</style>
